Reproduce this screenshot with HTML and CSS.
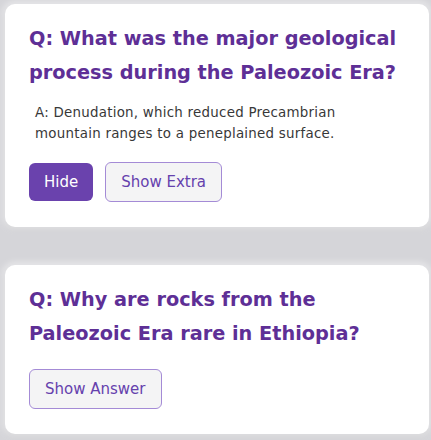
FILE: index.html
```html
<!DOCTYPE html>
<html lang="en">
<head>
<meta charset="utf-8">
<title>Flashcards</title>
<link rel="stylesheet" href="styles.css">
</head>
<body>
<main class="deck">
  <section class="card">
    <h2 class="question">Q: What was the major geological process during the Paleozoic Era?</h2>
    <p class="answer">A: Denudation, which reduced Precambrian mountain ranges to a peneplained surface.</p>
    <div class="actions">
      <button class="btn btn-primary">Hide</button>
      <button class="btn btn-outline">Show Extra</button>
    </div>
  </section>
  <section class="card">
    <h2 class="question">Q: Why are rocks from the Paleozoic Era rare in Ethiopia?</h2>
    <div class="actions">
      <button class="btn btn-outline">Show Answer</button>
    </div>
  </section>
</main>
</body>
</html>
```
FILE: styles.css
```css
html, body {
  margin: 0;
  padding: 0;
}
body {
  background: #d5d5d9;
  font-family: "DejaVu Sans", "Liberation Sans", sans-serif;
}
.deck {
  display: flex;
  flex-direction: column;
  gap: 38px;
  padding: 4px 2px 8px 5px;
}
.card {
  background: #ffffff;
  border-radius: 10px;
  padding: 18px 24px 25px 24px;
  box-shadow: 0 0 6px 3px rgba(255,255,255,0.45), 0 3px 6px rgba(0,0,0,0.08);
}
.question {
  margin: 0;
  font-size: 19.3px;
  line-height: 34px;
  font-weight: 700;
  color: #5e2f96;
}
.answer {
  margin: 12px 30px 0 6px;
  font-size: 13.4px;
  letter-spacing: 0.25px;
  line-height: 21px;
  color: #383838;
}
.actions {
  display: flex;
  align-items: center;
  gap: 12px;
  margin-top: 18px;
}
.btn {
  font-family: inherit;
  font-size: 15px;
  border-radius: 6px;
  padding: 0 15px;
  cursor: pointer;
}
.btn-primary {
  height: 38px;
  background: #6a42ad;
  color: #ffffff;
  border: none;
}
.btn-outline {
  height: 40px;
  background: #f4f4f5;
  color: #6541ad;
  border: 1px solid #a48bd6;
}
```
